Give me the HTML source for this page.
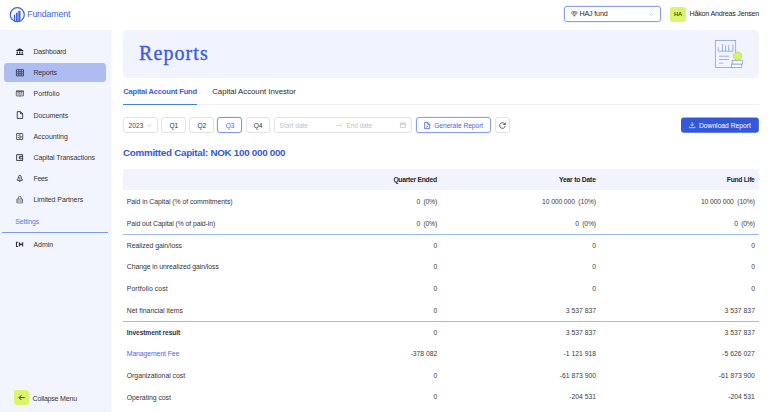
<!DOCTYPE html>
<html><head><meta charset="utf-8"><title>Reports</title>
<style>
*{box-sizing:border-box;margin:0;padding:0}
html,body{width:768px;height:412px;overflow:hidden;background:#fff;font-family:"Liberation Sans",sans-serif;}
body{position:relative}
.a,.t,svg{position:absolute}
.t{white-space:nowrap}
svg{overflow:visible}
.bx{position:absolute;top:117px;height:16px;border:1px solid #e3e3e3;border-radius:3px;background:#fff}
.hl{position:absolute;left:123.2px;width:635.6px;height:1px;background:#9dbaf3}

</style></head><body>
<!-- logo -->
<svg style="left:9px;top:6px;width:16.4px;height:16.4px" viewBox="-0.1 -0.5 16.4 16.4">
 <defs><clipPath id="lc"><circle cx="8.2" cy="8.2" r="7.2"/></clipPath></defs>
 <g clip-path="url(#lc)" fill="#4263e0">
  <rect x="4.7" y="8.1" width="1.5" height="9"/>
  <rect x="6.9" y="6.1" width="1.7" height="11"/>
  <rect x="9.2" y="4.2" width="2.2" height="13"/>
 </g>
 <circle cx="8.2" cy="8.2" r="7" fill="none" stroke="#4263e0" stroke-width="1.2"/>
</svg>
<!-- fund select -->
<div class="a" style="left:564.1px;top:6.3px;width:97px;height:15.3px;border:1px solid #879fec;border-radius:3px;box-shadow:0 0 0 0.8px #e4eafc"></div>
<svg style="left:570.6px;top:11.4px;width:6.8px;height:5.8px" viewBox="0 0 6.8 5.8"><path d="M1.5.4h3.8l1.1 1.5L3.4 5.3.4 1.9z M.4 1.9h6 M2.3 1.9l1.1 3.2 1.1-3.2 M2.3 1.9L3.4.4l1.1 1.5" fill="none" stroke="#555" stroke-width=".55" stroke-linejoin="round"/></svg>
<svg style="left:648.8px;top:12.7px;width:4.8px;height:3px" viewBox="0 0 4.8 3"><path d="M.3.3l2.1 2.2L4.5.3" fill="none" stroke="#c0c0c0" stroke-width=".7"/></svg>
<!-- avatar -->
<div class="a" style="left:670.2px;top:6.6px;width:15.8px;height:15.5px;border-radius:3px;background:#daf46b"></div>

<!-- sidebar -->
<div class="a" style="left:0;top:29.5px;width:111.4px;height:383px;background:#f2f5fe"></div>
<div class="a" style="left:111px;top:30px;width:1px;height:382px;background:#f8fafe"></div>
<div class="a" style="left:3.9px;top:63px;width:102px;height:19.2px;border-radius:3.5px;background:#adbcf1"></div>
<div class="a" style="left:1.9px;top:231.8px;width:106px;height:1px;background:#7d98e8"></div>
<div class="a" style="left:13.7px;top:390px;width:15.2px;height:15.2px;border-radius:3px;background:#daf46b"></div>
<svg style="left:17.5px;top:394px;width:7.6px;height:7.2px" viewBox="0 0 7.6 7.2"><path d="M6.8 3.6H1.2 M3.5 1.1L1 3.6l2.5 2.5" fill="none" stroke="#3a3a3a" stroke-width=".9"/></svg>

<!-- sidebar icons -->
<svg style="left:15px;top:47px;width:10px;height:10px" viewBox="15 47 10 10"><path d="M19.75 48.2L16 50.4v.7h7.5v-.7z M16.7 51.6h1.15v2.1H16.7z M19.15 51.6h1.2v2.1h-1.2z M21.65 51.6h1.15v2.1h-1.15z M16 54.1h7.5v1H16z" fill="#26262c"/></svg>
<svg style="left:15px;top:68px;width:10px;height:10px" viewBox="15 68 10 10"><path d="M16.4 69.7h7.1v6.2h-7.1z M16.4 71.8h7.1 M16.4 73.85h7.1 M18.8 69.7v6.2 M21.15 69.7v6.2" fill="none" stroke="#30344f" stroke-width=".8"/></svg>
<svg style="left:15px;top:89px;width:10px;height:10px" viewBox="15 89 10 10"><path d="M16.3 91.2h7.15v4.7h-2.7l-.875.5-.875-.5h-2.7z M19.875 91.2v5 M17.3 92.7h1.6 M17.3 94.1h1.6 M20.85 92.7h1.6 M20.85 94.1h1.6" fill="none" stroke="#3a3a40" stroke-width=".7"/><path d="M16 91.1h7.75" stroke="#3a3a40" stroke-width=".9"/></svg>
<svg style="left:15px;top:110px;width:10px;height:10px" viewBox="15 110 10 10"><path d="M17.25 111.65h3.3l2.1 2.1v4.7h-5.4z M20.55 111.65v2.1h2.1" fill="none" stroke="#26262c" stroke-width=".85" stroke-linejoin="round"/></svg>
<svg style="left:15px;top:132px;width:10px;height:10px" viewBox="15 132 10 10"><path d="M16.6 133.5h6.1v5.95h-6.1z M19.9 133.5v5.95 M19.9 136.9h2.8" fill="none" stroke="#3a3a40" stroke-width=".8"/><path d="M17.8 134.8h.9v.9h-.9z M17.8 137.1h.9v.9h-.9z" fill="#3a3a40"/></svg>
<svg style="left:15px;top:153px;width:10px;height:10px" viewBox="15 153 10 10"><path d="M16.65 154.65h6v5.9h-6z M22.65 156.4h-3.3v2.4h3.3 M20.4 157.6h.8" fill="none" stroke="#26262c" stroke-width=".85"/></svg>
<svg style="left:15px;top:174px;width:10px;height:10px" viewBox="15 174 10 10"><path d="M19.85 175.3c-.85 0-1.25.55-1.25 1.3 0 1.5-.5 2.4-1.4 3.2v.45h5.3v-.45c-.9-.8-1.4-1.7-1.4-3.2 0-.75-.4-1.3-1.25-1.3z M19.2 180.7l.65 1 .65-1" fill="none" stroke="#2c2c32" stroke-width=".85" stroke-linejoin="round"/><path d="M19.85 177v2.3" stroke="#2c2c32" stroke-width=".7"/></svg>
<svg style="left:15px;top:195px;width:10px;height:10px" viewBox="15 195 10 10"><path d="M16.9 199.1h5.7v3.8h-5.7z M18.2 199v-1a1.55 1.55 0 013.1 0v1 M16.9 201h5.7" fill="none" stroke="#2c2c32" stroke-width=".6"/></svg>
<svg style="left:15px;top:240px;width:10px;height:10px" viewBox="15 240 10 10"><path d="M17.9 242.3h-1.4v4.2h1.4" fill="none" stroke="#35353c" stroke-width="1.1"/><path d="M18.8 241.8v5.2l2.2-2.3v-.6z M23.2 241.8v5.2l-2.2-2.3v-.6z" fill="#35353c"/></svg>

<!-- banner -->
<div class="a" style="left:123px;top:29.8px;width:636px;height:48px;background:#f1f4fe;border-radius:4.5px"></div>
<svg style="left:712px;top:38px;width:34px;height:32px" viewBox="712 38 34 32">
 <rect x="715.3" y="40.4" width="20.4" height="27.2" fill="#f1f4fe" stroke="#7a93e8" stroke-width=".7"/>
 <path d="M718.2 51.2h14.7 M718.2 51.2V47 M722.5 51.2V44.2 M725.5 51.2V45.3 M728.6 51.2V45.3 M732.9 51.2V44.2 M719 56.2h10 M719 59.5h10 M719 63.2h4.2" fill="none" stroke="#7a93e8" stroke-width=".7"/>
 <rect x="731.6" y="64" width="10.2" height="3.6" fill="#fff" stroke="#7a93e8" stroke-width=".7"/>
 <rect x="732.2" y="60.4" width="10.3" height="3.6" fill="#fff" stroke="#7a93e8" stroke-width=".7"/>
 <circle cx="737.6" cy="56.1" r="4.1" fill="#d8f266" stroke="#a9c65a" stroke-width=".5"/>
</svg>

<!-- tabs -->
<div class="a" style="left:123px;top:104px;width:636px;height:1px;background:#f0f0f0"></div>
<div class="a" style="left:123.2px;top:103.5px;width:74.2px;height:1.3px;background:#3f7dea"></div>

<!-- toolbar -->
<div class="bx" style="left:123.2px;width:34.4px"></div>
<svg style="left:147.2px;top:124px;width:4.6px;height:3px" viewBox="0 0 4.6 3"><path d="M.3.3l2 2.2L4.3.3" fill="none" stroke="#c0c0c0" stroke-width=".7"/></svg>
<div class="bx" style="left:161.3px;width:24.3px"></div>
<div class="bx" style="left:189.4px;width:24.3px"></div>
<div class="bx" style="left:217.4px;width:24.6px;border-color:#7f97ea;box-shadow:0 0 0 .5px #e3e9fc"></div>
<div class="bx" style="left:245.7px;width:24.3px"></div>
<div class="bx" style="left:273.7px;width:138.7px"></div>
<svg style="left:335.7px;top:123.3px;width:6.3px;height:4px" viewBox="0 0 6.3 4"><path d="M.2 2.6h5.8 M4.3 1l1.7 1.6" fill="none" stroke="#c2c2c2" stroke-width=".7"/></svg>
<svg style="left:400.3px;top:122.4px;width:5.8px;height:5.8px" viewBox="0 0 5.8 5.8"><path d="M.4 1.1h5v4.3H.4z M.4 2.5h5 M1.7.3v1.3 M4.1.3v1.3" fill="none" stroke="#c2c2c2" stroke-width=".7"/></svg>
<div class="bx" style="left:416.3px;width:74.5px;border-color:#8aa0ec;box-shadow:0 0 0 .6px #e3e9fc"></div>
<svg style="left:424px;top:121.7px;width:6.3px;height:7px" viewBox="0 0 6.3 7"><path d="M.6.4h3.1l2 2v4.2H.6z M3.7.4v2h2 M1.8 4.4l1 .9 1.4-1.6" fill="none" stroke="#4a6ae0" stroke-width=".8" stroke-linejoin="round"/></svg>
<div class="bx" style="left:494.6px;width:15.2px"></div>
<svg style="left:499px;top:122px;width:7px;height:6.5px" viewBox="0 0 7 6.5"><path d="M6 2.4A2.8 2.8 0 106.2 4 M6.3.6v1.9H4.4" fill="none" stroke="#444" stroke-width=".85"/></svg>
<svg style="left:680px;top:116px;width:80px;height:18px" viewBox="680 116 80 18"><rect x="681" y="117.45" width="77.85" height="15.25" rx="3" fill="#3358d8"/></svg>
<svg style="left:688.8px;top:121.8px;width:6.3px;height:6.2px" viewBox="0 0 6.3 6.2"><path d="M3.15.2v3.7 M1.7 2.5l1.45 1.45L4.6 2.5 M.4 4.5v1.2h5.5V4.5" fill="none" stroke="#fff" stroke-width=".7"/></svg>

<!-- table -->
<div class="a" style="left:123.2px;top:169.2px;width:635.6px;height:20.9px;background:#f1f4fe"></div>
<div class="hl" style="top:233.7px"></div>
<div class="hl" style="top:320.8px"></div>

<span class="t" id="logo" style="top:7.26px;line-height:14.08px;font-size:8.8px;color:#4263e0;font-family:'Liberation Sans',sans-serif;letter-spacing:-0.151px;left:27.16px;">Fundament</span>
<span class="t" id="fund" style="top:8.24px;line-height:11.52px;font-size:7.2px;color:#2a2a2a;font-family:'Liberation Sans',sans-serif;letter-spacing:-0.177px;left:579.44px;">HAJ fund</span>
<span class="t" id="ha" style="top:9.66px;line-height:9.28px;font-size:5.8px;color:#4d5a1e;font-family:'Liberation Sans',sans-serif;font-weight:bold;letter-spacing:-0.143px;left:673.91px;">HA</span>
<span class="t" id="name" style="top:8.34px;line-height:11.52px;font-size:7.2px;color:#1f1f1f;font-family:'Liberation Sans',sans-serif;letter-spacing:-0.233px;left:689.44px;">Håkon Andreas Jensen</span>
<span class="t" id="m0" style="top:46.1px;line-height:11.2px;font-size:7.0px;color:#34343b;font-family:'Liberation Sans',sans-serif;letter-spacing:-0.178px;left:33.45px;">Dashboard</span>
<span class="t" id="m1" style="top:67.2px;line-height:11.2px;font-size:7.0px;color:#34343b;font-family:'Liberation Sans',sans-serif;letter-spacing:-0.138px;left:33.45px;">Reports</span>
<span class="t" id="m2" style="top:88.3px;line-height:11.2px;font-size:7.0px;color:#34343b;font-family:'Liberation Sans',sans-serif;letter-spacing:0.063px;left:33.45px;">Portfolio</span>
<span class="t" id="m3" style="top:109.65px;line-height:11.2px;font-size:7.0px;color:#34343b;font-family:'Liberation Sans',sans-serif;letter-spacing:-0.084px;left:33.45px;">Documents</span>
<span class="t" id="m4" style="top:130.9px;line-height:11.2px;font-size:7.0px;color:#34343b;font-family:'Liberation Sans',sans-serif;letter-spacing:-0.029px;left:33.45px;">Accounting</span>
<span class="t" id="m5" style="top:152.0px;line-height:11.2px;font-size:7.0px;color:#34343b;font-family:'Liberation Sans',sans-serif;letter-spacing:-0.094px;left:33.45px;">Capital Transactions</span>
<span class="t" id="m6" style="top:173.0px;line-height:11.2px;font-size:7.0px;color:#34343b;font-family:'Liberation Sans',sans-serif;letter-spacing:-0.303px;left:33.45px;">Fees</span>
<span class="t" id="m7" style="top:194.1px;line-height:11.2px;font-size:7.0px;color:#34343b;font-family:'Liberation Sans',sans-serif;letter-spacing:-0.082px;left:33.45px;">Limited Partners</span>
<span class="t" id="m8" style="top:239.1px;line-height:11.2px;font-size:7.0px;color:#34343b;font-family:'Liberation Sans',sans-serif;letter-spacing:-0.039px;left:33.45px;">Admin</span>
<span class="t" id="settings" style="top:215.5px;line-height:11.2px;font-size:7.0px;color:#5b7be6;font-family:'Liberation Sans',sans-serif;letter-spacing:-0.206px;left:15.35px;">Settings</span>
<span class="t" id="collapse" style="top:392.5px;line-height:11.2px;font-size:7.0px;color:#34343b;font-family:'Liberation Sans',sans-serif;letter-spacing:-0.181px;left:32.55px;">Collapse Menu</span>
<span class="t" id="title" style="top:36.6px;line-height:32.0px;font-size:20px;color:#3d5edb;font-family:'Liberation Serif',serif;letter-spacing:1.112px;left:138.95px;-webkit-text-stroke:0.4px #3d5edb;">Reports</span>
<span class="t" id="tab1" style="top:85.92px;line-height:12.16px;font-size:7.6px;color:#3b5fdc;font-family:'Liberation Sans',sans-serif;font-weight:bold;letter-spacing:-0.225px;left:123.22px;">Capital Account Fund</span>
<span class="t" id="tab2" style="top:85.76px;line-height:12.48px;font-size:7.8px;color:#2a2a2a;font-family:'Liberation Sans',sans-serif;letter-spacing:-0.017px;left:212.21px;">Capital Account Investor</span>
<span class="t" id="year" style="top:120.82px;line-height:10.56px;font-size:6.6px;color:#444;font-family:'Liberation Sans',sans-serif;letter-spacing:0.065px;left:128.47px;">2023</span>
<span class="t" id="q0" style="top:120.82px;line-height:10.56px;font-size:6.6px;color:#333;font-family:'Liberation Sans',sans-serif;letter-spacing:-0.133px;left:169.57px;">Q1</span>
<span class="t" id="q1" style="top:120.82px;line-height:10.56px;font-size:6.6px;color:#333;font-family:'Liberation Sans',sans-serif;letter-spacing:-0.133px;left:197.57px;">Q2</span>
<span class="t" id="q2" style="top:120.82px;line-height:10.56px;font-size:6.6px;color:#4a6ae0;font-family:'Liberation Sans',sans-serif;letter-spacing:-0.133px;left:225.77px;">Q3</span>
<span class="t" id="q3" style="top:120.82px;line-height:10.56px;font-size:6.6px;color:#333;font-family:'Liberation Sans',sans-serif;letter-spacing:-0.133px;left:253.77px;">Q4</span>
<span class="t" id="sd" style="top:120.9px;line-height:10.4px;font-size:6.5px;color:#c2c2c2;font-family:'Liberation Sans',sans-serif;letter-spacing:0.024px;left:279.57px;">Start date</span>
<span class="t" id="ed" style="top:120.9px;line-height:10.4px;font-size:6.5px;color:#c2c2c2;font-family:'Liberation Sans',sans-serif;letter-spacing:-0.038px;left:346.48px;">End date</span>
<span class="t" id="gen" style="top:120.74px;line-height:10.72px;font-size:6.7px;color:#4a6ae0;font-family:'Liberation Sans',sans-serif;letter-spacing:-0.053px;left:434.17px;">Generate Report</span>
<span class="t" id="dl" style="top:120.74px;line-height:10.72px;font-size:6.7px;color:#ffffff;font-family:'Liberation Sans',sans-serif;letter-spacing:0.018px;left:698.96px;">Download Report</span>
<span class="t" id="head" style="top:144.86px;line-height:15.68px;font-size:9.8px;color:#3358d8;font-family:'Liberation Sans',sans-serif;font-weight:bold;letter-spacing:-0.271px;left:123.01px;">Committed Capital: NOK 100 000 000</span>
<span class="t" id="h1" style="top:174.76px;line-height:10.88px;font-size:6.8px;color:#25252a;font-family:'Liberation Sans',sans-serif;font-weight:bold;letter-spacing:-0.291px;right:331.19px;">Quarter Ended</span>
<span class="t" id="h2" style="top:174.76px;line-height:10.88px;font-size:6.8px;color:#25252a;font-family:'Liberation Sans',sans-serif;font-weight:bold;letter-spacing:-0.213px;right:172.31px;">Year to Date</span>
<span class="t" id="h3" style="top:174.76px;line-height:10.88px;font-size:6.8px;color:#25252a;font-family:'Liberation Sans',sans-serif;font-weight:bold;letter-spacing:-0.317px;right:13.42px;">Fund Life</span>
<span class="t" id="r0l" style="top:195.88px;line-height:11.04px;font-size:6.9px;color:#34343b;font-family:'Liberation Sans',sans-serif;letter-spacing:-0.052px;left:126.75px;">Paid in Capital (% of commitments)</span>
<span class="t" id="r0c0" style="top:196.66px;line-height:10.88px;font-size:6.8px;color:#3c3c42;font-family:'Liberation Sans',sans-serif;letter-spacing:-0.197px;right:331.00px;">0  (0%)</span>
<span class="t" id="r0c1" style="top:196.66px;line-height:10.88px;font-size:6.8px;color:#3c3c42;font-family:'Liberation Sans',sans-serif;letter-spacing:-0.123px;right:172.12px;">10 000 000  (10%)</span>
<span class="t" id="r0c2" style="top:196.66px;line-height:10.88px;font-size:6.8px;color:#3c3c42;font-family:'Liberation Sans',sans-serif;letter-spacing:-0.123px;right:13.22px;">10 000 000  (10%)</span>
<span class="t" id="r1l" style="top:217.78px;line-height:11.04px;font-size:6.9px;color:#34343b;font-family:'Liberation Sans',sans-serif;letter-spacing:-0.103px;left:126.75px;">Paid out Capital (% of paid-in)</span>
<span class="t" id="r1c0" style="top:218.56px;line-height:10.88px;font-size:6.8px;color:#3c3c42;font-family:'Liberation Sans',sans-serif;letter-spacing:-0.197px;right:331.00px;">0  (0%)</span>
<span class="t" id="r1c1" style="top:218.56px;line-height:10.88px;font-size:6.8px;color:#3c3c42;font-family:'Liberation Sans',sans-serif;letter-spacing:-0.197px;right:172.20px;">0  (0%)</span>
<span class="t" id="r1c2" style="top:218.56px;line-height:10.88px;font-size:6.8px;color:#3c3c42;font-family:'Liberation Sans',sans-serif;letter-spacing:-0.197px;right:13.30px;">0  (0%)</span>
<span class="t" id="r2l" style="top:239.88px;line-height:11.04px;font-size:6.9px;color:#34343b;font-family:'Liberation Sans',sans-serif;letter-spacing:-0.038px;left:126.75px;">Realized gain/loss</span>
<span class="t" id="r2c0" style="top:240.66px;line-height:10.88px;font-size:6.8px;color:#3c3c42;font-family:'Liberation Sans',sans-serif;letter-spacing:-0.141px;right:330.94px;">0</span>
<span class="t" id="r2c1" style="top:240.66px;line-height:10.88px;font-size:6.8px;color:#3c3c42;font-family:'Liberation Sans',sans-serif;letter-spacing:-0.141px;right:172.14px;">0</span>
<span class="t" id="r2c2" style="top:240.66px;line-height:10.88px;font-size:6.8px;color:#3c3c42;font-family:'Liberation Sans',sans-serif;letter-spacing:-0.141px;right:13.24px;">0</span>
<span class="t" id="r3l" style="top:261.48px;line-height:11.04px;font-size:6.9px;color:#34343b;font-family:'Liberation Sans',sans-serif;letter-spacing:-0.073px;left:126.75px;">Change in unrealized gain/loss</span>
<span class="t" id="r3c0" style="top:262.26px;line-height:10.88px;font-size:6.8px;color:#3c3c42;font-family:'Liberation Sans',sans-serif;letter-spacing:-0.141px;right:330.94px;">0</span>
<span class="t" id="r3c1" style="top:262.26px;line-height:10.88px;font-size:6.8px;color:#3c3c42;font-family:'Liberation Sans',sans-serif;letter-spacing:-0.141px;right:172.14px;">0</span>
<span class="t" id="r3c2" style="top:262.26px;line-height:10.88px;font-size:6.8px;color:#3c3c42;font-family:'Liberation Sans',sans-serif;letter-spacing:-0.141px;right:13.24px;">0</span>
<span class="t" id="r4l" style="top:283.38px;line-height:11.04px;font-size:6.9px;color:#34343b;font-family:'Liberation Sans',sans-serif;letter-spacing:0.086px;left:126.75px;">Portfolio cost</span>
<span class="t" id="r4c0" style="top:284.16px;line-height:10.88px;font-size:6.8px;color:#3c3c42;font-family:'Liberation Sans',sans-serif;letter-spacing:-0.141px;right:330.94px;">0</span>
<span class="t" id="r4c1" style="top:284.16px;line-height:10.88px;font-size:6.8px;color:#3c3c42;font-family:'Liberation Sans',sans-serif;letter-spacing:-0.141px;right:172.14px;">0</span>
<span class="t" id="r4c2" style="top:284.16px;line-height:10.88px;font-size:6.8px;color:#3c3c42;font-family:'Liberation Sans',sans-serif;letter-spacing:-0.141px;right:13.24px;">0</span>
<span class="t" id="r5l" style="top:304.78px;line-height:11.04px;font-size:6.9px;color:#34343b;font-family:'Liberation Sans',sans-serif;letter-spacing:-0.008px;left:126.75px;">Net financial items</span>
<span class="t" id="r5c0" style="top:305.56px;line-height:10.88px;font-size:6.8px;color:#3c3c42;font-family:'Liberation Sans',sans-serif;letter-spacing:-0.141px;right:330.94px;">0</span>
<span class="t" id="r5c1" style="top:305.56px;line-height:10.88px;font-size:6.8px;color:#3c3c42;font-family:'Liberation Sans',sans-serif;letter-spacing:0.010px;right:171.99px;">3 537 837</span>
<span class="t" id="r5c2" style="top:305.56px;line-height:10.88px;font-size:6.8px;color:#3c3c42;font-family:'Liberation Sans',sans-serif;letter-spacing:0.010px;right:13.09px;">3 537 837</span>
<span class="t" id="r6l" style="top:327.84px;line-height:10.72px;font-size:6.7px;color:#34343b;font-family:'Liberation Sans',sans-serif;font-weight:bold;letter-spacing:-0.120px;left:126.77px;">Investment result</span>
<span class="t" id="r6c0" style="top:328.46px;line-height:10.88px;font-size:6.8px;color:#3c3c42;font-family:'Liberation Sans',sans-serif;letter-spacing:-0.141px;right:330.94px;">0</span>
<span class="t" id="r6c1" style="top:328.46px;line-height:10.88px;font-size:6.8px;color:#3c3c42;font-family:'Liberation Sans',sans-serif;letter-spacing:0.010px;right:171.99px;">3 537 837</span>
<span class="t" id="r6c2" style="top:328.46px;line-height:10.88px;font-size:6.8px;color:#3c3c42;font-family:'Liberation Sans',sans-serif;letter-spacing:0.010px;right:13.09px;">3 537 837</span>
<span class="t" id="r7l" style="top:348.28px;line-height:11.04px;font-size:6.9px;color:#4a6ae0;font-family:'Liberation Sans',sans-serif;letter-spacing:-0.112px;left:126.75px;">Management Fee</span>
<span class="t" id="r7c0" style="top:349.06px;line-height:10.88px;font-size:6.8px;color:#3c3c42;font-family:'Liberation Sans',sans-serif;letter-spacing:-0.038px;right:330.84px;">-378 082</span>
<span class="t" id="r7c1" style="top:349.06px;line-height:10.88px;font-size:6.8px;color:#3c3c42;font-family:'Liberation Sans',sans-serif;letter-spacing:0.002px;right:172.00px;">-1 121 918</span>
<span class="t" id="r7c2" style="top:349.06px;line-height:10.88px;font-size:6.8px;color:#3c3c42;font-family:'Liberation Sans',sans-serif;letter-spacing:0.032px;right:13.07px;">-5 626 027</span>
<span class="t" id="r8l" style="top:370.48px;line-height:11.04px;font-size:6.9px;color:#34343b;font-family:'Liberation Sans',sans-serif;letter-spacing:-0.034px;left:126.75px;">Organizational cost</span>
<span class="t" id="r8c0" style="top:371.26px;line-height:10.88px;font-size:6.8px;color:#3c3c42;font-family:'Liberation Sans',sans-serif;letter-spacing:-0.141px;right:330.94px;">0</span>
<span class="t" id="r8c1" style="top:371.26px;line-height:10.88px;font-size:6.8px;color:#3c3c42;font-family:'Liberation Sans',sans-serif;letter-spacing:-0.004px;right:172.00px;">-61 873 900</span>
<span class="t" id="r8c2" style="top:371.26px;line-height:10.88px;font-size:6.8px;color:#3c3c42;font-family:'Liberation Sans',sans-serif;letter-spacing:-0.022px;right:13.12px;">-61 873 900</span>
<span class="t" id="r9l" style="top:391.68px;line-height:11.04px;font-size:6.9px;color:#34343b;font-family:'Liberation Sans',sans-serif;letter-spacing:-0.049px;left:126.75px;">Operating cost</span>
<span class="t" id="r9c0" style="top:392.46px;line-height:10.88px;font-size:6.8px;color:#3c3c42;font-family:'Liberation Sans',sans-serif;letter-spacing:-0.141px;right:330.94px;">0</span>
<span class="t" id="r9c1" style="top:392.46px;line-height:10.88px;font-size:6.8px;color:#3c3c42;font-family:'Liberation Sans',sans-serif;letter-spacing:-0.013px;right:172.01px;">-204 531</span>
<span class="t" id="r9c2" style="top:392.46px;line-height:10.88px;font-size:6.8px;color:#3c3c42;font-family:'Liberation Sans',sans-serif;letter-spacing:-0.025px;right:13.13px;">-204 531</span>
</body></html>
